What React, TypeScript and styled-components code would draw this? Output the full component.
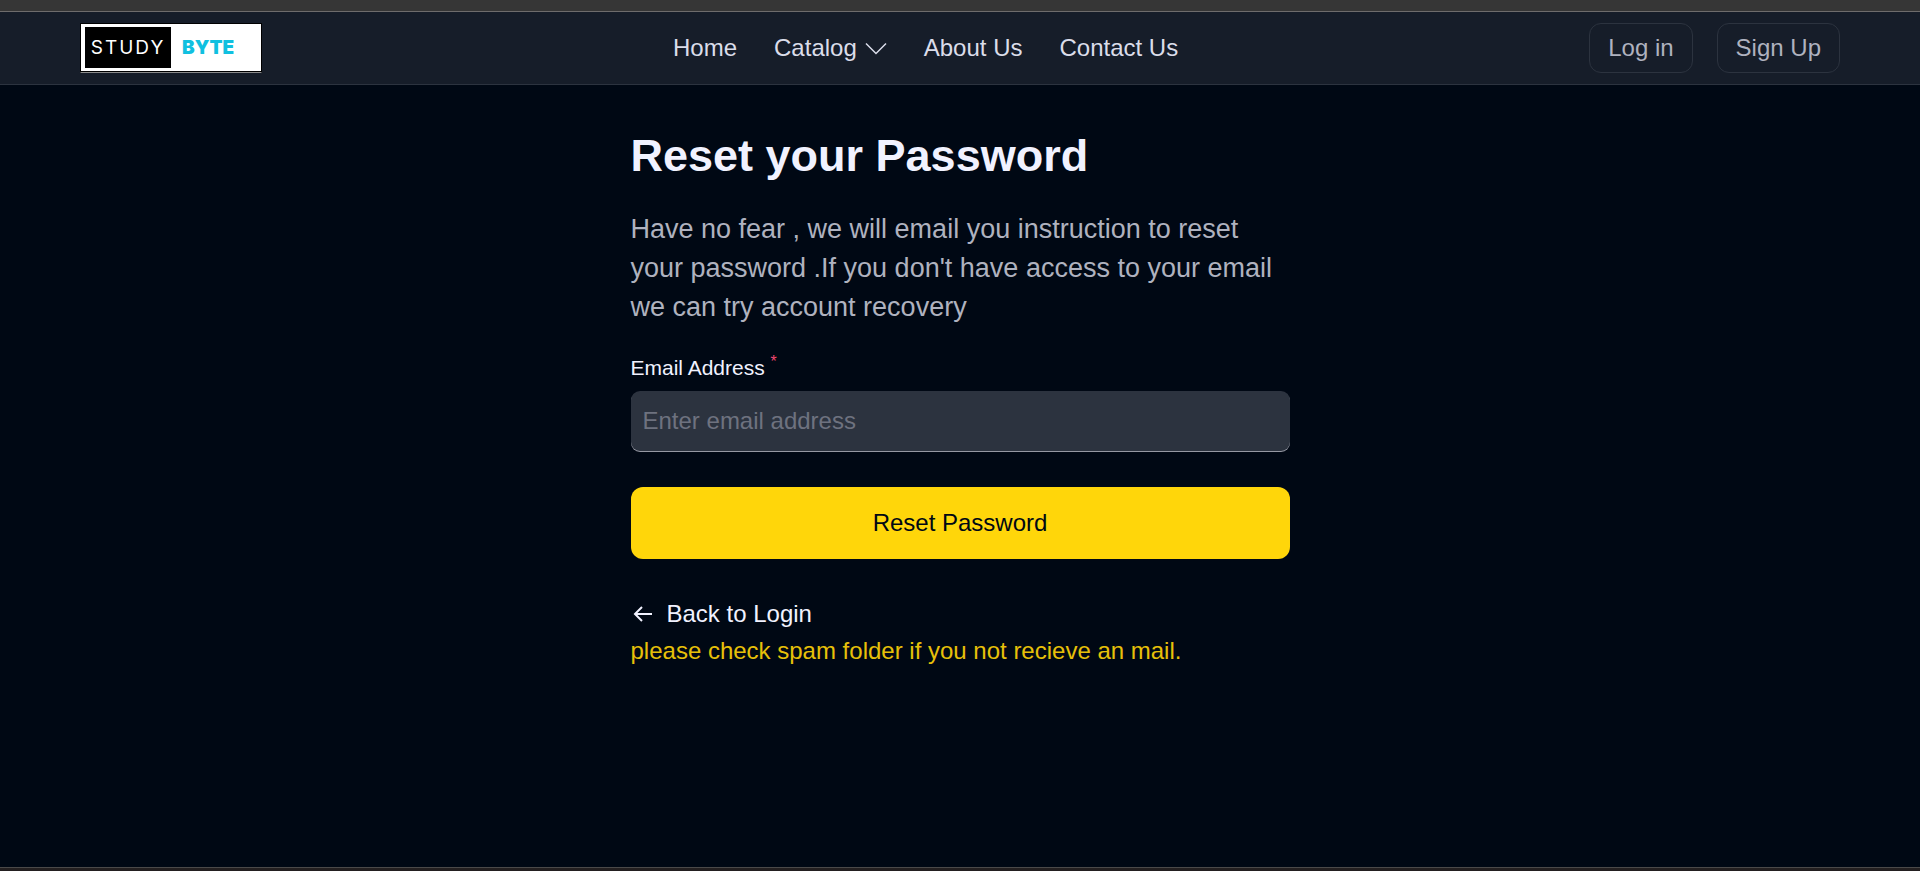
import React from "react";
import styled, { createGlobalStyle } from "styled-components";
import { BiArrowBack } from "react-icons/bi";

const GlobalStyle = createGlobalStyle`
  *, *::before, *::after { box-sizing: border-box; }
  body {
    margin: 0;
    background: #000814;
    color: #f1f2ff;
    font-family: "Liberation Sans", Arial, sans-serif;
    font-size: 24px;
    line-height: 36px;
  }
  h1, p { margin: 0; }
  a { color: inherit; text-decoration: none; }
  button, input { font: inherit; }
`;

const Page = styled.div`
  min-height: 100vh;
  display: flex;
  flex-direction: column;
`;

const TopStrip = styled.div`
  height: 12px;
  background: #363636;
  border-bottom: 1px solid #6e6c6c;
`;

const BottomStrip = styled.div`
  height: 4px;
  background: #231f20;
  border-top: 1px solid #4a4949;
`;

const Header = styled.header`
  height: 73px;
  display: flex;
  align-items: center;
  justify-content: space-between;
  padding: 0 80px;
  background: #161d29;
  border-bottom: 1px solid #2c333f;
`;

const Logo = styled.a`
  display: flex;
  align-items: stretch;
  width: 182px;
  height: 50px;
  padding: 3px 4px 4px;
  background: #fff;
  border: 1px solid #000;
  border-bottom-color: #8b8b8b;
  box-shadow: inset 0 -1px 0 #000;
  font-family: Inter, sans-serif;
  font-size: 19px;
  line-height: 24px;
`;

const LogoStudy = styled.span`
  display: flex;
  align-items: center;
  justify-content: center;
  width: 86px;
  background: #000;
  color: #fff;
  font-weight: 400;
  letter-spacing: 2px;
`;

const LogoByte = styled.span`
  display: flex;
  align-items: center;
  padding-left: 11px;
  color: #10c0e0;
  font-weight: 900;
`;

const Nav = styled.nav`
  display: flex;
  align-items: center;
  gap: 37px;
  color: #dbddea;
`;

const NavLink = styled.a`
  display: flex;
  align-items: center;
  gap: 8px;
`;

const Actions = styled.div`
  display: flex;
  gap: 24px;
`;

const OutlineButton = styled.button`
  height: 50px;
  padding: 0 18px;
  border: 1px solid #2c333f;
  border-radius: 12px;
  background: #161d29;
  color: #afb2bf;
`;

const Main = styled.main`
  flex: 1;
  width: 100%;
  max-width: 659px;
  margin: 0 auto;
  padding-top: 44px;
`;

const Title = styled.h1`
  font-size: 45px;
  line-height: 54px;
  font-weight: 700;
`;

const Intro = styled.p`
  margin: 27px 0 25px;
  font-size: 27px;
  line-height: 39px;
  color: #afb2bf;
`;

const Form = styled.form`
  display: flex;
  flex-direction: column;
`;

const Label = styled.label`
  margin-bottom: 7px;
  font-size: 21px;
  line-height: 32px;
`;

const Required = styled.sup`
  font-size: 16px;
  line-height: 0;
  color: #ef476f;
`;

const EmailInput = styled.input`
  width: 100%;
  height: 60px;
  padding: 0 12px;
  border: 0;
  border-radius: 9px;
  background: #2c333f;
  color: #f1f2ff;
  box-shadow: 0 1px 0 #9598a3;
  &::placeholder { color: #6e727f; opacity: 1; }
`;

const SubmitButton = styled.button`
  height: 72px;
  margin-top: 36px;
  border: 0;
  border-radius: 12px;
  background: #ffd60a;
  color: #000814;
`;

const BackLink = styled.a`
  display: flex;
  align-items: center;
  gap: 12px;
  margin-top: 37px;
`;

const Note = styled.p`
  margin-top: 1px;
  color: #e7c009;
`;

export default function App() {
  return (
    <>
      <GlobalStyle />
      <Page>
        <TopStrip />
        <Header>
          <Logo href="#" aria-label="Study Byte">
            <LogoStudy>STUDY</LogoStudy>
            <LogoByte>BYTE</LogoByte>
          </Logo>
          <Nav>
            <NavLink href="#">Home</NavLink>
            <NavLink href="#">
              Catalog
              <svg width="22" height="22" viewBox="0 0 22 22" fill="none" stroke="currentColor" strokeWidth="1.5" aria-hidden="true">
                <path d="M1 6.5 L11 16.5 L21 6.5" />
              </svg>
            </NavLink>
            <NavLink href="#">About Us</NavLink>
            <NavLink href="#">Contact Us</NavLink>
          </Nav>
          <Actions>
            <OutlineButton type="button">Log in</OutlineButton>
            <OutlineButton type="button">Sign Up</OutlineButton>
          </Actions>
        </Header>
        <Main>
          <Title>Reset your Password</Title>
          <Intro>
            Have no fear , we will email you instruction to reset your password .If you don't have
            access to your email we can try account recovery
          </Intro>
          <Form onSubmit={(e) => e.preventDefault()}>
            <Label htmlFor="email">
              Email Address <Required>*</Required>
            </Label>
            <EmailInput id="email" type="email" placeholder="Enter email address" />
            <SubmitButton type="submit">Reset Password</SubmitButton>
          </Form>
          <BackLink href="#">
            <BiArrowBack aria-hidden="true" />
            Back to Login
          </BackLink>
          <Note>please check spam folder if you not recieve an mail.</Note>
        </Main>
        <BottomStrip />
      </Page>
    </>
  );
}
